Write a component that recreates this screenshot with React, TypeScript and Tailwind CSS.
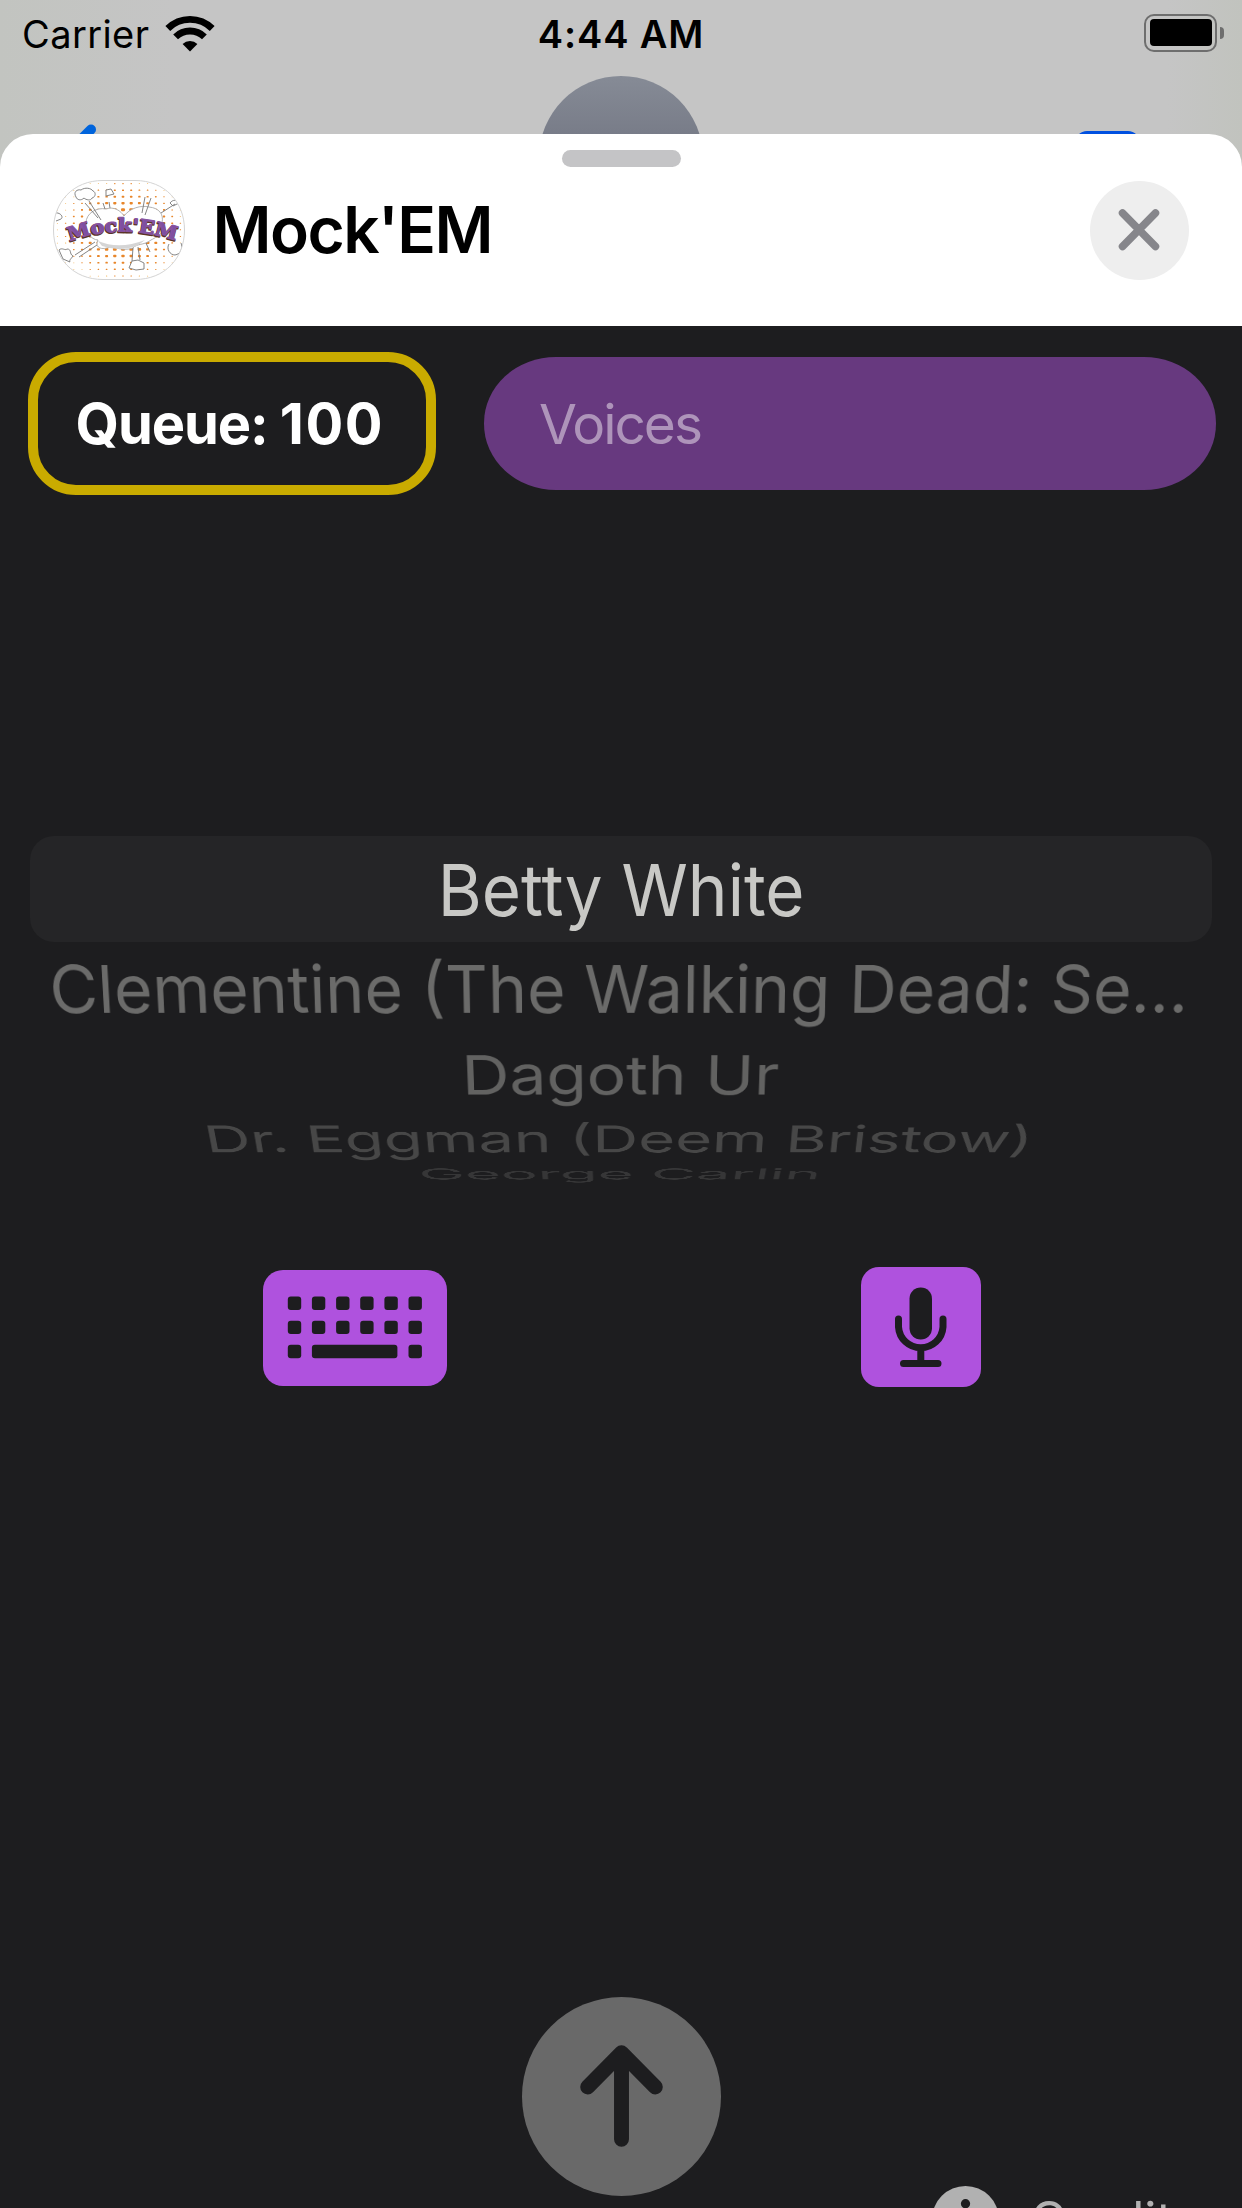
const dotColumns = Array.from({ length: 17 }, (_, i) => i - 8);
const dotRows = Array.from({ length: 15 }, (_, i) => i - 7);

function AppLogo() {
  return (
    <svg viewBox="0 0 132 100" className="h-[100px] w-[132px] shrink-0">
      <defs>
        <clipPath id="pill">
          <path d="M50 .5H82C112 .5 131.500 22 131.500 50S112 99.500 82 99.500H50C20 99.500 .5 78 .5 50S20 .5 50 .5Z" />
        </clipPath>
        <path id="arc" d="M17 61.500Q66 42 124 61" />
      </defs>
      <g clipPath="url(#pill)">
        <rect width="132" height="100" fill="#fff" />
        {dotColumns.map((c) =>
          dotRows.map((r) => {
            const d = Math.hypot(c / 8.5, r / 8.5);
            const s = Math.max(1, 5.2 * (1.1 - d));
            return d < 1.05 ? (
              <rect
                key={`${c}:${r}`}
                x={70 + c * 8.2 - s / 2}
                y={50 + r * 6.6 - s / 2}
                width={s}
                height={s * 0.75}
                rx={s / 4}
                fill={d < 0.85 ? "#e8862a" : "#f3b45a"}
              />
            ) : null;
          }),
        )}
        <g fill="#fff" stroke="#777" strokeWidth="0.9" strokeLinejoin="round">
          <path d="M33 43C33 33 44 27 53 29C61 26 68 31 71 36C77 28 88 25 96 27C106 28 111 34 109 43C115 50 106 56 98 60C90 66 84 63 80 68C68 72 60 65 54 68C46 70 42 66 45 60C38 60 31 50 33 43Z" stroke="#aaa" />
          <path d="M23 17C20 12 24 9 28 10C32 7 38 8 40 11C43 12 43 17 39 18C38 21 33 20 31 18C28 21 24 20 23 17Z" />
          <path d="M53 10L58 9L61 14L53 16Z" />
          <path d="M79 81L76 88L83 90L91 89L91 83L85 80Z" />
          <path d="M116 64C113 69 117 75 122 75C128 74 130 68 128 63" />
          <path d="M6 70C9 67 12 71 14 69C19 69 16 74 20 76C18 79 16 80 17 82L10 79Z" />
          <path d="M117 23C120 19 124 20 126 23L120 26Z" />
          <path d="M2 33C7 32 11 37 8 39L3 41" />
          <path d="M32 23L45 38M36 21L48 40M92 17L89 33M98 18L92 35M108 33L122 24M50 23L52 29M56 22L57 28M22 75L42 62M26 77L44 65M80 68L79 81M85 67L87 80M93 63L97 72" fill="none" />
        </g>
        <path d="M45 61Q66 70 92 60L84 66Q66 72 49 66Z" fill="#d5d5d5" />
        <g fontFamily="DejaVu Serif" fontWeight="700" fontSize="19">
          <text fill="#3a2430" stroke="#5a3428" strokeWidth="1.600" strokeLinejoin="round" transform="translate(-.6 1)">
            <textPath href="#arc" textLength="108" lengthAdjust="spacingAndGlyphs">Mock'EM</textPath>
          </text>
          <text fill="#7d4fa3" stroke="#8a55a0" strokeWidth="0.900" strokeLinejoin="round">
            <textPath href="#arc" textLength="108" lengthAdjust="spacingAndGlyphs">Mock'EM</textPath>
          </text>
        </g>
      </g>
      <path d="M50 .5H82C112 .5 131.500 22 131.500 50S112 99.500 82 99.500H50C20 99.500 .5 78 .5 50S20 .5 50 .5Z" fill="none" stroke="#d4d4d4" />
    </svg>
  );
}

function WifiIcon() {
  return (
    <svg viewBox="0 0 50 38" className="h-[38px] w-[50px]" fill="none" stroke="#000" strokeWidth="6.800">
      <path d="M2.800 14.500A31.500 31.500 0 0 1 47.200 14.500" />
      <path d="M10.600 22.900A20.500 20.500 0 0 1 39.400 22.900" />
      <path d="M25 37.500L17.600 30A10.500 10.500 0 0 1 32.400 30Z" fill="#000" stroke="none" />
    </svg>
  );
}

function KeyboardIcon() {
  const xs = [24.8, 48.9, 73.1, 97.2, 121.4, 145.5];
  return (
    <svg viewBox="0 0 184 116" className="h-[116px] w-[184px]">
      <rect width="184" height="116" rx="20" fill="#af52de" />
      <g fill="#1d1d1f">
        {xs.map((x) => (
          <g key={x}>
            <rect x={x} y="26.500" width="13.400" height="13.400" rx="3" />
            <rect x={x} y="50.700" width="13.400" height="13.400" rx="3" />
          </g>
        ))}
        <rect x="24.800" y="74.800" width="13.400" height="13.400" rx="3" />
        <rect x="48.900" y="74.800" width="85.500" height="13.400" rx="3" />
        <rect x="145.500" y="74.800" width="13.400" height="13.400" rx="3" />
      </g>
    </svg>
  );
}

function MicIcon() {
  return (
    <svg viewBox="0 0 120 120" className="size-[120px]">
      <rect width="120" height="120" rx="18" fill="#af52de" />
      <rect x="48.500" y="20.500" width="22.500" height="52" rx="11.200" fill="#1d1d1f" />
      <path
        d="M37.500 52V60A22.300 22.300 0 0 0 82 60V52M59.800 82.500V96.500M42.500 96.500H77"
        fill="none"
        stroke="#1d1d1f"
        strokeWidth="7"
        strokeLinecap="round"
      />
    </svg>
  );
}

const voiceRows = [
  {
    name: "Clementine (The Walking Dead: Se...",
    row: "h-[93px] pr-[4px] text-[#6b6b6a]",
    tilt: "[transform:perspective(3400px)_rotateX(-20.5deg)_scale(0.917,0.98)]",
  },
  {
    name: "Dagoth Ur",
    row: "h-[80px] pr-[2px] text-[#626261]",
    tilt: "[transform:perspective(3400px)_rotateX(-39.6deg)_scale(0.915,0.98)]",
  },
  {
    name: "Dr. Eggman (Deem Bristow)",
    row: "h-[48px] pr-[4px] text-[#474747]",
    tilt: "[transform:perspective(3400px)_rotateX(-58.2deg)_scale(0.882,0.98)]",
  },
  {
    name: "George Carlin",
    row: "h-[22px] pr-[2px] text-[#363637]",
    tilt: "[transform:perspective(3400px)_rotateX(-77.6deg)_scale(0.857,0.98)]",
  },
];

export default function App() {
  return (
    <div className="relative flex h-[2208px] w-[1242px] flex-col overflow-hidden bg-[linear-gradient(to_right,#c2c4c0,#c5c5c5_14%,#c5c5c5_94%,#c1c3be)] font-['Inter','Liberation_Sans',sans-serif] leading-none">
      {/* Conversation header peeking out above the sheet */}
      <div className="absolute top-[76px] left-[539px] size-[164px] rounded-full bg-[linear-gradient(#868b96,#787c88_36%,#6a6e7a)]" />
      <svg viewBox="0 0 40 60" className="absolute top-[120px] left-[62px] h-[60px] w-[40px]" fill="none" stroke="#0064dc" strokeWidth="10" strokeLinecap="round">
        <path d="M29 9.500L4 34.500" />
      </svg>
      <div className="absolute top-[131px] left-[1075px] h-12 w-[65px] rounded-xl bg-[#0050e0]" />

      <header className="grid h-[134px] shrink-0 grid-cols-[1fr_auto_1fr] items-start">
        <div className="flex h-[68px] items-center pl-[22px]">
          <span className="w-[129px] text-[38px] tracking-[0.400px]">Carrier</span>
          <span className="ml-[13.500px] -mt-[2px]">
            <WifiIcon />
          </span>
        </div>
        <div className="flex h-[68px] items-center text-[38px] font-semibold tracking-[0.850px]">4:44 AM</div>
        <div className="flex h-[65px] items-center justify-end gap-[3px] pr-[18px]">
          <div className="h-[38px] w-[73px] rounded-[10px] border-[2.500px] border-[#6e6e6e] p-[3.500px]">
            <div className="h-full rounded-[4px] bg-black" />
          </div>
          <div className="h-3 w-[4px] rounded-r-full bg-[#6e6e6e]" />
        </div>
      </header>

      <main className="relative flex grow flex-col overflow-hidden rounded-t-[33px] bg-white">
        <div className="mt-4 ml-[561.500px] h-[17px] w-[119px] shrink-0 rounded-full bg-[#c4c4c6]" />
        <div className="mt-[13px] flex h-[100px] shrink-0 items-center pl-[53px]">
          <AppLogo />
          <h1 className="ml-[27.500px] text-[64px] font-semibold tracking-[-1.550px]">Mock'EM</h1>
          <button className="mr-[53px] ml-auto flex size-[99px] items-center justify-center rounded-full bg-[#eeeeee]">
            <svg viewBox="0 0 44 44" className="mr-[2px] size-[44px]" stroke="#86868b" strokeWidth="7.500" strokeLinecap="round">
              <path d="M5.500 5L38.500 38.500M38.500 5L5.500 38.500" />
            </svg>
          </button>
        </div>

        <section className="mt-[46px] flex grow flex-col bg-[#1d1d1f]">
          <div className="flex shrink-0 pt-[26px] pl-[28px]">
            <div className="flex h-[143px] w-[408px] items-center rounded-[48px] border-[10.500px] border-[#c9ab00] pl-[37.500px] text-[56px] font-bold text-white">
              <p className="tracking-[-1.100px]">
                Queue: <span className="tracking-[1.600px]">100</span>
              </p>
            </div>
            <div className="mt-[5px] ml-[47.500px] flex h-[133px] w-[732px] items-center rounded-[72px/66px] bg-[#67397f] pt-[2px] pl-[55.500px] text-[55px] tracking-[-2px] text-[#ae94ba]">
              Voices
            </div>
          </div>

          <div className="mt-[341px] flex shrink-0 flex-col px-[30px] text-[72px] whitespace-nowrap">
            <div className="flex h-[106px] items-center justify-center rounded-[24px] bg-[#252527] pt-[2px] text-[#c8c8c5]">
              <span className="[transform:scaleX(0.935)]">Betty White</span>
            </div>
            {voiceRows.map((v) => (
              <div key={v.name} className={`flex items-center justify-center ${v.row}`}>
                <span className={`shrink-0 ${v.tilt}`}>{v.name}</span>
              </div>
            ))}
          </div>

          <div className="mt-[82px] flex shrink-0 items-center pl-[263px]">
            <span className="pt-[2px]">
              <KeyboardIcon />
            </span>
            <span className="ml-[414px]">
              <MicIcon />
            </span>
          </div>

          <div className="mt-[610px] flex shrink-0 justify-center">
            <svg viewBox="0 0 200 200" className="size-[199px]">
              <circle cx="100" cy="100" r="100" fill="#696969" />
              <path d="M66 90.500L100 56L134 90.500M100 60V143" fill="none" stroke="#1d1d1f" strokeWidth="15" strokeLinecap="round" strokeLinejoin="round" />
            </svg>
          </div>
          <div className="-mt-[10px] ml-[931.500px] flex h-[67px] shrink-0 items-center text-[50px] text-[#b1b1b1]">
            <svg viewBox="0 0 68 68" className="size-[67px]">
              <circle cx="34" cy="34" r="34" fill="#b1b1b1" />
              <circle cx="34" cy="18" r="4.700" fill="#1d1d1f" />
              <path d="M27 30H35V50M26 50H43" fill="none" stroke="#1d1d1f" strokeWidth="5" />
            </svg>
            <span className="ml-[31.500px]">Credits</span>
          </div>
        </section>
      </main>
    </div>
  );
}
